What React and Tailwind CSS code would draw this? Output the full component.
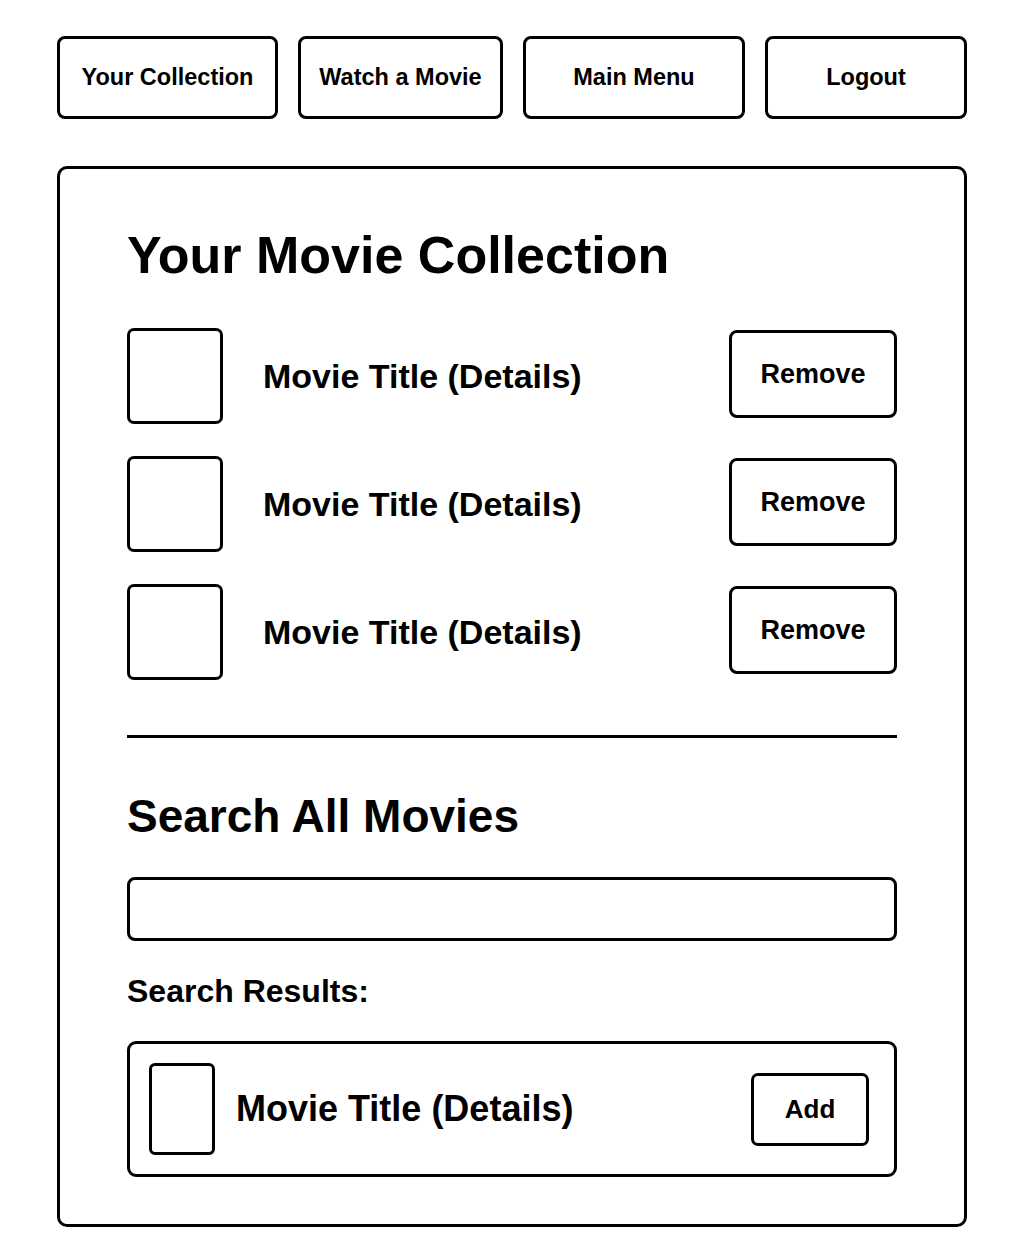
import React from 'react';

const navItems = [
  { label: 'Your Collection', width: 'w-[221px]' },
  { label: 'Watch a Movie', width: 'w-[205px]' },
  { label: 'Main Menu', width: 'w-[222px]' },
  { label: 'Logout', width: 'w-[202px]' }
];

const collection = [1, 2, 3];

const App = () => {
  return (
    <div
      className="min-h-screen bg-white text-black pt-[36px] pl-[57px] w-[1024px]"
      style={{ fontFamily: '"Liberation Sans", Arial, sans-serif' }}
    >
      <nav className="flex justify-between w-[910px] mb-[47px]">
        {navItems.map((item) => (
          <button
            key={item.label}
            className={`${item.width} h-[83px] border-[3px] border-black rounded-[8px] bg-white flex items-center justify-center text-[23.5px] font-bold leading-none`}
          >
            {item.label}
          </button>
        ))}
      </nav>

      <main className="w-[910px] border-[3px] border-black rounded-[10px] pt-[60px] px-[67px] pb-[47px]">
        <h1 className="text-[52px] font-bold leading-none mb-[47px]">Your Movie Collection</h1>

        <div className="flex flex-col gap-[32px]">
          {collection.map((id) => (
            <div key={id} className="flex items-start h-[96px]">
              <div className="w-[96px] h-[96px] border-[3px] border-black rounded-[7px]" />
              <span className="self-center ml-[40px] flex-1 text-[34px] font-bold leading-none">Movie Title (Details)</span>
              <button className="mt-[2px] w-[168px] h-[88px] border-[3px] border-black rounded-[8px] flex items-center justify-center text-[27px] font-bold leading-none">
                Remove
              </button>
            </div>
          ))}
        </div>

        <hr className="mt-[55px] h-[3px] bg-black border-0" />

        <h2 className="mt-[55px] text-[46px] font-bold leading-none">Search All Movies</h2>

        <input
          type="text"
          className="mt-[38px] block w-[770px] h-[64px] border-[3px] border-black rounded-[8px] outline-none"
        />

        <p className="mt-[34px] text-[32px] font-bold leading-none">Search Results:</p>

        <div className="mt-[34px] h-[136px] border-[3px] border-black rounded-[9px] flex items-center pl-[19px] pr-[25px]">
          <div className="w-[66px] h-[92px] border-[3px] border-black rounded-[6px]" />
          <span className="ml-[21px] flex-1 text-[36px] font-bold leading-none">Movie Title (Details)</span>
          <button className="w-[118px] h-[73px] border-[3px] border-black rounded-[7px] flex items-center justify-center text-[26px] font-bold leading-none">
            Add
          </button>
        </div>
      </main>
    </div>
  );
};

export default App;
